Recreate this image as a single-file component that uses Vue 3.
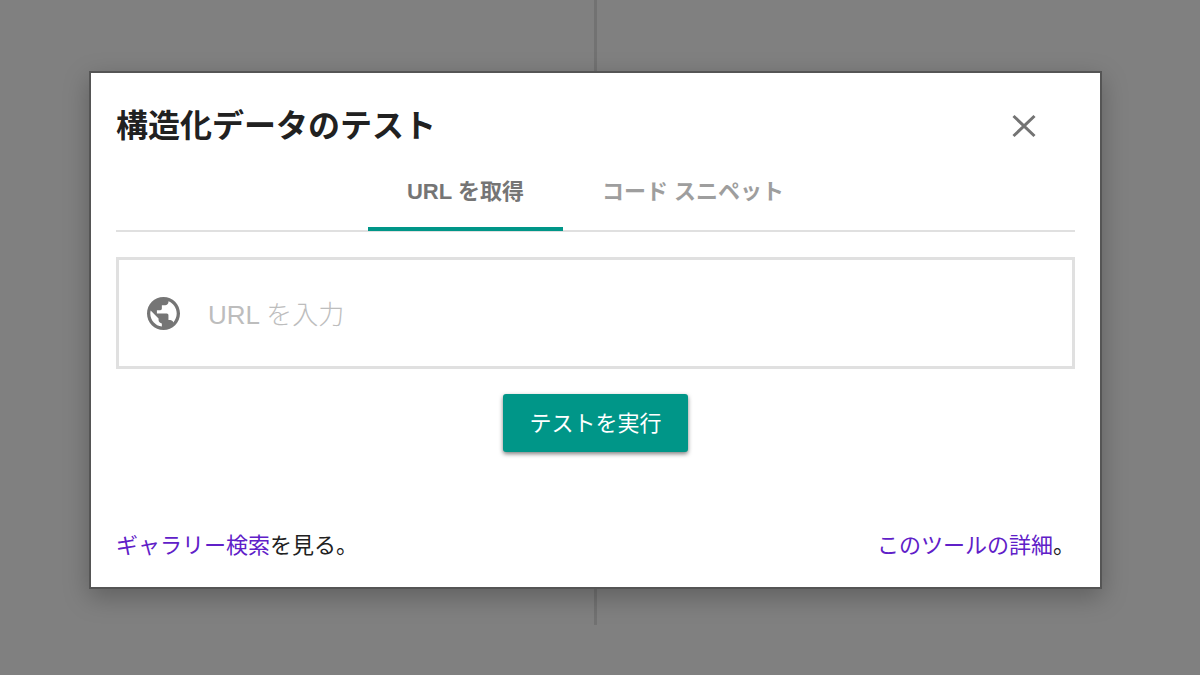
<script setup>
import { ref } from 'vue'

const tabs = ['URL を取得', 'コード スニペット']
const active = ref(0)
const url = ref('')
</script>

<template>
  <main class="backdrop">
    <div class="divider"></div>
    <section class="dialog" role="dialog" aria-labelledby="dialog-title">
      <header class="head">
        <h1 id="dialog-title">構造化データのテスト</h1>
        <button class="close" type="button" aria-label="閉じる">
          <svg viewBox="0 0 24 24" width="24" height="24" aria-hidden="true">
            <path d="M1.5 2L22.5 22M22.5 2L1.5 22" fill="none" stroke="#737373" stroke-width="3" />
          </svg>
        </button>
      </header>

      <div class="tabs" role="tablist">
        <button
          v-for="(tab, i) in tabs"
          :key="tab"
          type="button"
          role="tab"
          class="tab"
          :class="{ active: active === i }"
          :aria-selected="active === i"
          @click="active = i"
        >{{ tab }}</button>
      </div>

      <form @submit.prevent>
        <label class="field">
          <svg viewBox="2 2 20 20" width="33" height="33" aria-label="URL">
            <path fill="#757575" d="M12 2C6.48 2 2 6.48 2 12s4.48 10 10 10 10-4.48 10-10S17.52 2 12 2zm-1 17.93c-3.95-.49-7-3.85-7-7.93 0-.62.08-1.21.21-1.79L9 15v1c0 1.1.9 2 2 2v1.93zm6.9-2.54c-.26-.81-1-1.39-1.9-1.39h-1v-3c0-.55-.45-1-1-1H8v-2h2c.55 0 1-.45 1-1V7h2c1.1 0 2-.9 2-2v-.41c2.93 1.19 5 4.06 5 7.41 0 2.08-.8 3.97-2.1 5.39z" />
          </svg>
          <input v-model="url" type="text" placeholder="URL を入力" />
        </label>
        <button class="run" type="submit">テストを実行</button>
      </form>

      <footer class="foot">
        <p><a href="#gallery">ギャラリー検索</a>を見る。</p>
        <p><a href="#details">このツールの詳細</a>。</p>
      </footer>
    </section>
  </main>
</template>

<style>
body {
  margin: 0;
  background: #808080;
}
</style>

<style scoped>
.backdrop {
  position: relative;
  box-sizing: border-box;
  min-height: 100vh;
  padding: 71px 98px 50px 89px;
  background: #808080;
  font-family: "Liberation Sans", "Noto Sans CJK JP", sans-serif;
  color: #212121;
}
.divider {
  position: absolute;
  top: 0;
  bottom: 50px;
  left: calc(50% - 6px);
  width: 3px;
  background: #727272;
}
.dialog {
  position: relative;
  box-sizing: border-box;
  padding: 33px 25px 25px;
  background: #fff;
  border: 2px solid #555;
  box-shadow: 0 8px 24px rgba(0, 0, 0, 0.26);
}
.head {
  display: flex;
  justify-content: space-between;
  align-items: center;
  height: 40px;
}
h1 {
  margin: 0;
  font-size: 32px;
  line-height: 40px;
  font-weight: 700;
}
button {
  font-family: inherit;
  border: 0;
  cursor: pointer;
}
.close {
  display: flex;
  margin-right: 39px;
  padding: 0;
  background: none;
}
.tabs {
  display: flex;
  justify-content: center;
  margin-top: 5px;
  border-bottom: 2px solid #e0e0e0;
}
.tab {
  height: 80px;
  margin-bottom: -1px;
  padding: 0 39px;
  border-bottom: 4px solid transparent;
  background: none;
  color: #9e9e9e;
  font-size: 22px;
  font-weight: 700;
}
.tab.active {
  color: #757575;
  border-bottom-color: #009688;
}
.field {
  display: flex;
  align-items: center;
  gap: 28px;
  box-sizing: border-box;
  height: 112px;
  margin-top: 25px;
  padding: 0 28px;
  border: 3px solid #e0e0e0;
}
.field input {
  flex: 1;
  min-width: 0;
  padding: 4px 0 0;
  border: 0;
  outline: 0;
  background: none;
  color: #212121;
  font-family: "Liberation Sans", "Noto Sans CJK JP", sans-serif;
  font-size: 26px;
  font-weight: 300;
  line-height: 40px;
}
.field input::placeholder {
  color: #bdbdbd;
  opacity: 1;
}
.run {
  display: block;
  height: 58px;
  margin: 25px auto 0;
  padding: 0 26px 5px;
  border-radius: 3px;
  background: #009688;
  color: #fff;
  font-size: 22px;
  box-shadow: 0 2px 4px rgba(0, 0, 0, 0.5);
}
.foot {
  display: flex;
  justify-content: space-between;
  margin-top: 78px;
  font-size: 22px;
  line-height: 32px;
}
.foot p {
  margin: 0;
}
.foot a {
  color: #6020c8;
  text-decoration: none;
}
</style>
